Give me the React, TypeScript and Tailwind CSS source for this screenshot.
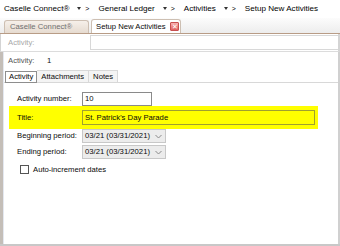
import React from "react";

const font = { fontFamily: '"Liberation Sans", Arial, sans-serif' };

const Chevron = () => (
  <svg width="7" height="5" viewBox="0 0 7 5" className="ml-auto mr-[3px]">
    <path d="M0.5 1 L3.5 4 L6.5 1" fill="none" stroke="#8a8a8a" strokeWidth="1" />
  </svg>
);

const Crumb = ({ label, last }: { label: string; last?: boolean }) => (
  <div className="flex items-center whitespace-nowrap">
    <span>{label}</span>
    {!last && (
      <span className="flex items-center ml-[8px] mr-[9px] gap-[4px]">
        <svg width="4" height="3" viewBox="0 0 4 3">
          <path d="M0 0 H4 L2 3 Z" fill="#333" />
        </svg>
        <span className="text-[7px]">&gt;</span>
      </span>
    )}
  </div>
);

export default function App() {
  return (
    <div
      className="w-[340px] h-[246px] bg-white flex flex-col overflow-hidden text-[7.7px] text-[#0a0a0a] border-b-2 border-[#c8c8c8] whitespace-nowrap"
      style={font}
    >
      {/* breadcrumb */}
      <div className="h-[18px] flex items-center pl-[4px] shrink-0 text-[8.1px] text-[#000]">
        <Crumb label="Caselle Connect®" />
        <Crumb label="General Ledger" />
        <Crumb label="Activities" />
        <Crumb label="Setup New Activities" last />
      </div>

      {/* document tabs */}
      <div className="h-[16px] shrink-0 flex items-end pl-[4px] gap-[2px] bg-gradient-to-b from-[#fcfcfc] to-[#ededed] border-b border-[#b89c86]">
        <div className="h-[13px] w-[85px] flex items-center pl-[5px] text-[#707070] rounded-t-[3px] border border-b-0 border-[#cdbfb2] bg-gradient-to-b from-[#f6f0ea] to-[#e6dbd0]">
          Caselle Connect®
        </div>
        <div className="h-[14px] w-[90px] flex items-center pl-[4px] rounded-t-[3px] border border-b-0 border-[#cdbfb2] bg-white">
          <span>Setup New Activities</span>
          <span className="ml-auto mr-[1px] w-[9px] h-[9px] rounded-[1px] bg-gradient-to-b from-[#f7b0b0] to-[#e06060] border border-[#c85050] flex items-center justify-center text-white text-[7px] leading-none">
            ✕
          </span>
        </div>
      </div>

      {/* filter row */}
      <div className="h-[18px] shrink-0 flex items-center border-l border-r-2 border-[#d4d4d4] border-b border-b-[#dcdcdc]">
        <span className="w-[89px] pl-[7px] text-[#a8a8a8]">Activity:</span>
        <div className="flex-1 h-[15px] border border-r-0 border-[#d8d8d8] bg-white" />
      </div>

      {/* main panel */}
      <div className="flex-1 flex flex-col border-l-[3px] border-l-[#c4beb8] border-r-2 border-r-[#d0d0d0]">
        <div className="flex-1 flex flex-col border-l border-l-[#e4e8f0]">
          <div className="h-[15px] mt-[1px] flex items-center pl-[4px] text-[#555]">
            <span className="w-[39px]">Activity:</span>
            <span className="text-[#111]">1</span>
          </div>

          {/* sub tabs */}
          <div className="mt-[2px] h-[13px] flex items-end pl-[1px] border-b border-[#d8d8d8]">
            <div className="h-[12px] px-[3px] flex items-center border border-[#8e8e8e] bg-white -mb-px z-10">
              Activity
            </div>
            <div className="h-[12px] px-[4px] flex items-center border border-l-0 border-b-0 border-[#d8d8d8] bg-[#f4f4f4]">
              Attachments
            </div>
            <div className="h-[12px] px-[4px] flex items-center border border-l-0 border-b-0 border-[#d8d8d8] bg-[#f4f4f4]">
              Notes
            </div>
          </div>

          {/* form */}
          <div className="flex flex-col pt-[9px] pl-[5px]">
            <div className="flex items-center h-[14px] pl-[8px]">
              <span className="w-[65px]">Activity number:</span>
              <div className="w-[70px] h-[14px] border border-[#8a8a8a] flex items-center pl-[2px]">10</div>
            </div>
            <div className="w-[309px] h-[23px] bg-[#ffff00] flex items-center pl-[8px]">
              <span className="w-[65px]">Title:</span>
              <div className="w-[233px] h-[15px] border border-[#a0a030] flex items-center pl-[2px]">
                St. Patrick’s Day Parade
              </div>
            </div>
            <div className="flex items-center h-[14px] pl-[8px]">
              <span className="w-[65px]">Beginning period:</span>
              <div className="w-[84px] h-[14px] border border-[#c8c8c8] bg-[#ececec] flex items-center pl-[2px]">
                03/21 (03/31/2021)
                <Chevron />
              </div>
            </div>
            <div className="mt-[2px] flex items-center h-[14px] pl-[8px]">
              <span className="w-[65px]">Ending period:</span>
              <div className="w-[84px] h-[14px] border border-[#c8c8c8] bg-[#ececec] flex items-center pl-[2px]">
                03/21 (03/31/2021)
                <Chevron />
              </div>
            </div>
            <div className="mt-[5px] flex items-center h-[11px] pl-[11px]">
              <div className="w-[9px] h-[9px] border border-[#555] bg-white" />
              <span className="ml-[4px]">Auto-increment dates</span>
            </div>
          </div>
        </div>
      </div>
    </div>
  );
}
